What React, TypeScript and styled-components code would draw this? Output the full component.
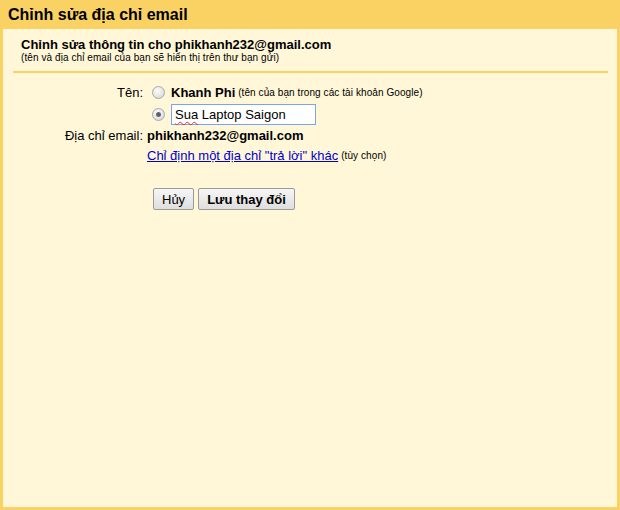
import React from 'react';
import styled, { createGlobalStyle } from 'styled-components';

const GlobalStyle = createGlobalStyle`
  html, body {
    margin: 0;
    padding: 0;
    background: #fad163;
  }
  body {
    font-family: Arial, "Liberation Sans", sans-serif;
    color: #000;
  }
`;

const Frame = styled.div`
  width: 620px;
  height: 510px;
  box-sizing: border-box;
  background: #fad163;
  padding: 0 3px 3px 3px;
  display: flex;
  flex-direction: column;
`;

const Title = styled.h1`
  margin: 0;
  height: 29px;
  padding: 0 5px;
  font-size: 16px;
  font-weight: bold;
  line-height: 30px;
`;

const Body = styled.div`
  flex: 1;
  background: #fff7d7;
  padding: 8px 0 0 0;
`;

const Intro = styled.div`
  padding: 0 0 0 18px;
`;

const IntroTitle = styled.div`
  font-size: 13px;
  font-weight: bold;
  line-height: 15px;
`;

const IntroHint = styled.div`
  font-size: 10px;
  line-height: 12px;
  letter-spacing: 0.08px;
`;

const Hint = styled.span`
  font-size: 10px;
  font-weight: normal;
  letter-spacing: 0.08px;
`;

const Divider = styled.div`
  height: 2px;
  margin: 7px 9px 0 10px;
  background: #fad163;
`;

const Form = styled.div`
  display: grid;
  grid-template-columns: 140px auto;
  column-gap: 4px;
  margin-top: 9px;
  font-size: 13px;
`;

const Label = styled.div`
  text-align: right;
  line-height: 21px;
  height: 21px;
`;

const Cell = styled.div`
  display: flex;
  flex-direction: column;
`;

const Line = styled.div<{ $h?: number }>`
  display: flex;
  align-items: center;
  height: ${(p) => p.$h ?? 21}px;
  white-space: nowrap;
`;

// old-style grey radio button
const Radio = styled.input.attrs({ type: 'radio', name: 'sender-name' })`
  appearance: none;
  margin: 0 3px 0 5px;
  width: 13px;
  height: 13px;
  box-sizing: border-box;
  border-radius: 50%;
  border: 1px solid #a8a8a8;
  background: radial-gradient(circle at 40% 35%, #fcfcfc 0%, #e4e4e4 60%, #cfcfcf 100%);
  position: relative;
  &:checked::after {
    content: '';
    position: absolute;
    left: 3px;
    top: 3px;
    width: 5px;
    height: 5px;
    border-radius: 50%;
    background: radial-gradient(circle, #555 0%, #777 100%);
  }
`;

const Strong = styled.b`
  font-weight: bold;
  margin-left: 3px;
`;

const NameBox = styled.div`
  margin-left: 3px;
  width: 145px;
  height: 21px;
  box-sizing: border-box;
  border: 1px solid #7aa6e6;
  padding: 0 3px;
  font-size: 13px;
  line-height: 19px;
  background: #fff;
`;

const Misspelled = styled.span`
  text-decoration: underline wavy #e03030;
  text-decoration-thickness: 1px;
  text-underline-offset: 2px;
  text-decoration-skip-ink: none;
`;

const Link = styled.a`
  color: #0000cc;
  text-decoration: underline;
  cursor: pointer;
  margin-right: 3px;
`;

const Actions = styled.div`
  display: flex;
  gap: 4px;
  margin: 23px 0 0 150px;
`;

const Button = styled.button<{ $bold?: boolean }>`
  height: 22px;
  padding: 0 8px;
  font: ${(p) => (p.$bold ? 'bold' : 'normal')} 13px Arial, "Liberation Sans", sans-serif;
  color: #000;
  border: 1px solid #9a9a9a;
  border-radius: 2px;
  background: linear-gradient(#f6f6f6, #dedede);
  cursor: pointer;
`;

export default function App() {
  return (
    <>
      <GlobalStyle />
      <Frame>
        <Title>Chỉnh sửa địa chỉ email</Title>
        <Body>
          <Intro>
            <IntroTitle>Chỉnh sửa thông tin cho phikhanh232@gmail.com</IntroTitle>
            <IntroHint>(tên và địa chỉ email của bạn sẽ hiển thị trên thư bạn gửi)</IntroHint>
          </Intro>
          <Divider />
          <Form>
            <Label>Tên:</Label>
            <Cell>
              <Line>
                <Radio />
                <Strong>Khanh Phi</Strong>
                <Hint>&nbsp;(tên của bạn trong các tài khoản Google)</Hint>
              </Line>
              <Line $h={22}>
                <Radio defaultChecked />
                <NameBox>
                  <Misspelled>Sua</Misspelled> Laptop Saigon
                </NameBox>
              </Line>
            </Cell>
            <Label>Địa chỉ email:</Label>
            <Cell>
              <Line>
                <b>phikhanh232@gmail.com</b>
              </Line>
              <Line $h={19}>
                <Link>Chỉ định một địa chỉ "trả lời" khác</Link>
                <Hint>(tùy chọn)</Hint>
              </Line>
            </Cell>
          </Form>
          <Actions>
            <Button>Hủy</Button>
            <Button $bold>Lưu thay đổi</Button>
          </Actions>
        </Body>
      </Frame>
    </>
  );
}
